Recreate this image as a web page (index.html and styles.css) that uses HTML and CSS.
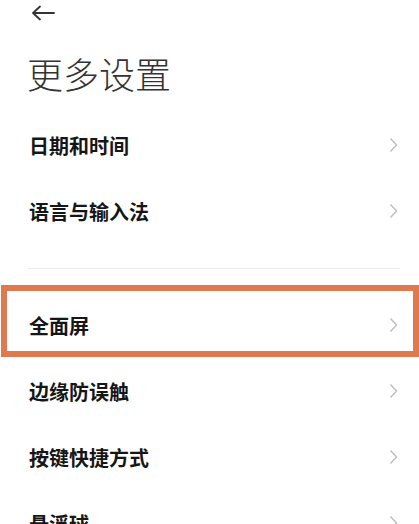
FILE: index.html
```html
<!DOCTYPE html>
<html>
<head>
<meta charset="utf-8" />
<title>更多设置</title>
<link rel="stylesheet" href="styles.css">
</head>
<body>

<div class="topbar">
  <svg class="back" width="24" height="16" viewBox="0 0 24 16">
    <path d="M2 8 H23 M9 1.5 L2 8 L9 14.5" fill="none" stroke="#333" stroke-width="1.8" stroke-linecap="round" stroke-linejoin="round"/>
  </svg>
</div>

<h1 class="title">更多设置</h1>

<div class="list">
  <div class="row"><span>日期和时间</span><svg class="chev" width="9" height="16" viewBox="0 0 9 16"><polyline points="1.5,1.5 7.5,8 1.5,14.5" fill="none" stroke="#bdbdbd" stroke-width="1.4"/></svg></div>
  <div class="row"><span>语言与输入法</span><svg class="chev" width="9" height="16" viewBox="0 0 9 16"><polyline points="1.5,1.5 7.5,8 1.5,14.5" fill="none" stroke="#bdbdbd" stroke-width="1.4"/></svg></div>
</div>

<div class="divider"></div>

<div class="list">
  <div class="row marked"><span>全面屏</span><svg class="chev" width="9" height="16" viewBox="0 0 9 16"><polyline points="1.5,1.5 7.5,8 1.5,14.5" fill="none" stroke="#bdbdbd" stroke-width="1.4"/></svg></div>
  <div class="row"><span>边缘防误触</span><svg class="chev" width="9" height="16" viewBox="0 0 9 16"><polyline points="1.5,1.5 7.5,8 1.5,14.5" fill="none" stroke="#bdbdbd" stroke-width="1.4"/></svg></div>
  <div class="row"><span>按键快捷方式</span><svg class="chev" width="9" height="16" viewBox="0 0 9 16"><polyline points="1.5,1.5 7.5,8 1.5,14.5" fill="none" stroke="#bdbdbd" stroke-width="1.4"/></svg></div>
  <div class="row"><span>悬浮球</span><svg class="chev" width="9" height="16" viewBox="0 0 9 16"><polyline points="1.5,1.5 7.5,8 1.5,14.5" fill="none" stroke="#bdbdbd" stroke-width="1.4"/></svg></div>
</div>

</body>
</html>
```

FILE: styles.css
```css
body
{
    margin: 0;
    background-color: #ffffff;
    font-family: "Noto Sans CJK SC", "Noto Sans", sans-serif;
    overflow: hidden;
}

.topbar
{
    height: 24px;
    padding-left: 31px;
    padding-top: 5px;
    box-sizing: border-box;
}

.back
{
    display: block;
}

.title
{
    margin: 0;
    height: 88px;
    padding-left: 27px;
    padding-top: 27px;
    box-sizing: border-box;
    font-size: 36px;
    font-weight: 300;
    line-height: 44px;
    color: #333333;
}

.row
{
    position: relative;
    height: 66px;
    display: flex;
    align-items: center;
    justify-content: space-between;
    padding-left: 29px;
    padding-right: 21px;
    font-size: 20px;
    font-weight: 600;
    color: #161616;
}

.chev
{
    display: block;
}

.divider
{
    height: 48px;
    display: flex;
    align-items: center;
    padding: 0 19px 0 28px;
}

.divider::after
{
    content: "";
    flex: 1;
    height: 1px;
    background-color: #ececec;
}

.marked::before
{
    content: "";
    position: absolute;
    top: -7px;
    bottom: 1px;
    left: 1px;
    right: 0;
    border: 6px solid #de7a4e;
}
```
